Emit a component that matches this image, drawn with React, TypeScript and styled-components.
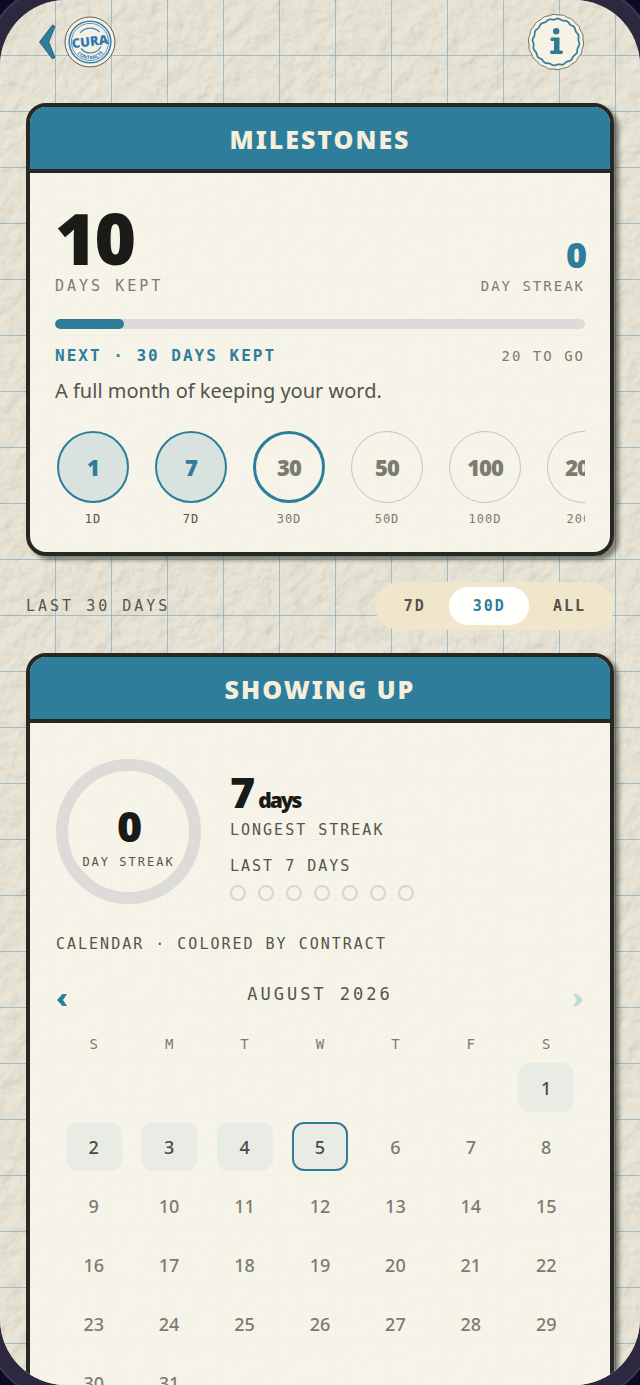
import { useState } from 'react';
import styled, { createGlobalStyle, css } from 'styled-components';

const GlobalStyle = createGlobalStyle`
  :root {
    --ink: #1a1a16;
    --ink-border: #282823;
    --text: #55544b;
    --text-soft: #7c7b72;
    --teal: #2d7d9b;
    --cream: #f4eedb;
    --track: #dcdbd7;
    --sans: 'Noto Sans', 'Open Sans', sans-serif;
    --mono: 'DejaVu Sans Mono', 'Liberation Mono', monospace;
  }

  *, *::before, *::after {
    box-sizing: border-box;
  }

  body {
    margin: 0;
    background: #0d0b24;
    color: var(--ink);
    font-family: var(--sans);
  }

  button {
    padding: 0;
    border: none;
    background: none;
    color: inherit;
    font: inherit;
    cursor: pointer;
  }

  svg {
    display: block;
  }
`;

const Screen = styled.div`
  position: relative;
  height: 100vh;
  overflow: hidden;
  border-radius: 66px;
  box-shadow: 0 0 0 15px #2b2840, 0 0 0 17px #3c3a50;
`;

const Paper = styled.svg`
  position: absolute;
  inset: 0;
  width: 100%;
  height: 100%;
`;

const Scroller = styled.div`
  --grid-line: transparent 55px, rgba(120, 168, 196, 0.65) 55px;

  position: relative;
  height: 100%;
  overflow-y: auto;
  scrollbar-width: none;
  background-image:
    linear-gradient(to right, var(--grid-line)),
    linear-gradient(to bottom, var(--grid-line));
  background-size: 56px 56px;
`;

const Page = styled.main`
  display: flex;
  flex-direction: column;
  padding: 0 26px 40px;
`;

const TopBar = styled.header`
  display: flex;
  align-items: center;
  justify-content: space-between;
  padding: 13px 29px 32px 12px;
`;

const BackLink = styled.a`
  display: flex;
  align-items: center;
  gap: 8px;
`;

const Card = styled.section`
  overflow: hidden;
  border: 4px solid var(--ink-border);
  border-radius: 20px;
  background: rgba(246, 244, 234, 0.94);
  background-clip: padding-box;
  box-shadow: 5px 4px 4px rgba(50, 48, 38, 0.55);
`;

const CardTitle = styled.h2`
  margin: 0;
  padding: 15px 0 13px;
  border-bottom: 4px solid var(--ink-border);
  background: var(--teal);
  color: var(--cream);
  font-size: 25px;
  font-weight: 900;
  line-height: 34px;
  letter-spacing: 2px;
  text-align: center;
  text-transform: uppercase;
`;

const CardBody = styled.div<{ $padding: string }>`
  padding: ${({ $padding }) => $padding};
`;

const labelSizes = {
  xs: css`
    font-size: 12px;
    letter-spacing: 1px;
  `,
  sm: css`
    font-size: 14px;
    letter-spacing: 2px;
  `,
  md: css`
    font-size: 15px;
    letter-spacing: 2px;
  `,
  wide: css`
    font-size: 15px;
    letter-spacing: 3px;
  `,
  lg: css`
    font-size: 17px;
    letter-spacing: 3px;
  `,
};

const Label = styled.span<{ $size?: keyof typeof labelSizes; $soft?: boolean }>`
  color: ${({ $soft }) => ($soft ? 'var(--text-soft)' : 'var(--text)')};
  font-family: var(--mono);
  line-height: 20px;
  text-transform: uppercase;
  white-space: nowrap;
  ${({ $size }) => labelSizes[$size ?? 'md']}
`;

const Row = styled.div`
  display: flex;
  align-items: flex-end;
  justify-content: space-between;
`;

const Stat = styled.div<{ $align?: 'start' | 'end' }>`
  display: flex;
  flex-direction: column;
  align-items: ${({ $align }) => $align ?? 'start'};
  gap: 3px;
`;

const StatValue = styled.strong<{ $size: number; $teal?: boolean }>`
  color: ${({ $teal }) => ($teal ? 'var(--teal)' : 'var(--ink)')};
  font-size: ${({ $size }) => $size}px;
  font-weight: 900;
  line-height: 1;
  letter-spacing: -2px;

  small {
    margin-left: 5px;
    font-size: 21px;
  }
`;

const Track = styled.div`
  height: 10px;
  margin: 23px 0 17px;
  overflow: hidden;
  border-radius: 5px;
  background: var(--track);
`;

const Fill = styled.div`
  height: 100%;
  border-radius: 5px;
  background: var(--teal);
`;

const NextLabel = styled.span`
  color: var(--teal);
  font-family: var(--mono);
  font-size: 16px;
  font-weight: 700;
  line-height: 20px;
  letter-spacing: 2px;
`;

const Note = styled.p`
  margin: 10px 0 25px;
  color: var(--text);
  font-size: 20px;
  line-height: 30px;
`;

const Badges = styled.ul`
  display: flex;
  gap: 22px;
  margin: 0;
  padding: 0;
  overflow: hidden;
  list-style: none;
`;

const BadgeItem = styled.li`
  display: flex;
  flex: 0 0 76px;
  flex-direction: column;
  align-items: center;
  gap: 6px;
`;

type BadgeState = 'done' | 'next' | 'locked';

const BadgeCircle = styled.span<{ $state: BadgeState }>`
  display: flex;
  align-items: center;
  justify-content: center;
  width: 72px;
  height: 72px;
  border: 1px solid #c3c2bc;
  border-radius: 50%;
  color: var(--text-soft);
  font-size: 22px;
  font-weight: 900;
  letter-spacing: -1px;

  ${({ $state }) =>
    $state === 'done' &&
    css`
      border: 2px solid var(--teal);
      background: #d8e3df;
      color: var(--teal);
    `}

  ${({ $state }) =>
    $state === 'next' &&
    css`
      border: 3px solid var(--teal);
    `}
`;

const RangeBar = styled.div`
  display: flex;
  align-items: center;
  justify-content: space-between;
  padding: 26px 0 23px;
`;

const Segments = styled.div`
  display: flex;
  padding: 5px;
  border-radius: 24px;
  background: #efe6cc;
`;

const Segment = styled.button<{ $active: boolean }>`
  height: 38px;
  padding: 0 23px 0 24px;
  border-radius: 19px;
  background: ${({ $active }) => ($active ? '#fffffb' : 'transparent')};
  color: ${({ $active }) => ($active ? 'var(--teal)' : 'var(--text)')};
  font-family: var(--mono);
  font-size: 15px;
  font-weight: 700;
  letter-spacing: 2px;
`;

const StreakRow = styled.div`
  display: flex;
  align-items: center;
  gap: 29px;
`;

const Ring = styled.div`
  display: flex;
  flex-direction: column;
  align-items: center;
  justify-content: center;
  gap: 5px;
  width: 145px;
  height: 145px;
  padding-top: 12px;
  border: 12px solid var(--track);
  border-radius: 50%;
`;

const RingLabel = styled(Label)`
  font-size: 12px;
`;

const StreakInfo = styled.div`
  display: flex;
  flex-direction: column;
  gap: 7px;
  padding-top: 7px;
`;

const DayLog = styled.div`
  display: flex;
  flex-direction: column;
  gap: 9px;
  padding-top: 9px;
`;

const Dots = styled.div`
  display: flex;
  gap: 12px;

  span {
    width: 16px;
    height: 16px;
    border: 2px solid #d6d5cf;
    border-radius: 50%;
  }
`;

const SectionLabel = styled.div`
  display: flex;
  padding: 30px 0;
`;

const MonthBar = styled.div`
  display: flex;
  align-items: flex-start;
  justify-content: space-between;
  margin-bottom: 18px;
`;

const MonthButton = styled.button`
  display: flex;
  padding-top: 9px;
  color: var(--teal);

  &:disabled {
    color: #c0dadb;
  }
`;

const Calendar = styled.table`
  width: 100%;
  border-spacing: 0;
  table-layout: fixed;

  th {
    height: 38px;
    padding: 0;
    color: var(--text-soft);
    font-family: var(--mono);
    font-size: 14px;
    font-weight: 400;
  }

  td {
    padding: 0 0 10px;
  }
`;

const Day = styled.span<{ $past: boolean; $today: boolean }>`
  display: flex;
  align-items: center;
  justify-content: center;
  width: 56px;
  height: 49px;
  margin: 0 auto;
  border-radius: 12px;
  color: var(--text-soft);
  font-size: 18px;
  font-weight: 500;

  ${({ $past }) =>
    $past &&
    css`
      background: #e9ebe5;
      color: #4a4a42;
    `}

  ${({ $today }) =>
    $today &&
    css`
      border: 2px solid var(--teal);
    `}
`;

function PaperBackground() {
  return (
    <Paper aria-hidden="true">
      <defs>
        <filter id="grain" x="0" y="0" width="100%" height="100%" colorInterpolationFilters="sRGB">
          <feTurbulence type="fractalNoise" baseFrequency="0.06" numOctaves="3" seed="7" />
          <feColorMatrix values="0 0 0 0 0  0 0 0 0 0  0 0 0 0 0  1 0 0 0 0" />
          <feDiffuseLighting surfaceScale="3" diffuseConstant="1.05" lightingColor="#f3eee0">
            <feDistantLight azimuth="225" elevation="62" />
          </feDiffuseLighting>
        </filter>
      </defs>
      <rect width="100%" height="100%" filter="url(#grain)" />
      <rect width="100%" height="100%" fill="#e6e2d3" fillOpacity="0.8" />
    </Paper>
  );
}

function BackArrow() {
  return (
    <svg width="18" height="36" viewBox="0 0 18 36" aria-hidden="true">
      <path
        d="M14.500 1L1.500 18L14.500 35L17 33.500L10.800 18L17 2.500Z"
        fill="#2d7d9b"
        stroke="#2b5660"
        strokeWidth="0.800"
        strokeLinejoin="round"
      />
    </svg>
  );
}

function Logo() {
  return (
    <svg width="52" height="52" viewBox="0 0 52 52" role="img" aria-label="Cura Contracts">
      <circle cx="26" cy="26" r="25" fill="#f5f2e4" stroke="#625d4f" />
      <g fill="none" stroke="#3d7fb5">
        <circle cx="26" cy="26" r="20.800" strokeWidth="1.600" />
        <circle cx="26" cy="26" r="18.600" strokeWidth="0.800" />
        <path d="M16 17A13 13 0 0 1 35.500 16M17 32.500A12 12 0 0 0 37 30.500" strokeWidth="1.200" />
      </g>
      <path id="logo-arc" d="M8.800 29.500A17.500 17.500 0 0 0 43.200 28.500" fill="none" />
      <g fill="#3279b3" fontFamily="'Open Sans', 'Noto Sans', sans-serif" textAnchor="middle">
        <text
          x="26"
          y="30"
          fontSize="13"
          fontWeight="800"
          transform="rotate(-7 26 26)"
        >
          CURA
        </text>
        <text fontSize="5" fontWeight="700">
          <textPath href="#logo-arc" startOffset="50%">
            CONTRACTS
          </textPath>
        </text>
      </g>
    </svg>
  );
}

// wavy outline used by the round info seal
function sealPath(radius: number, depth: number, waves: number) {
  const points = Array.from({ length: 180 }, (_, i) => {
    const angle = (i / 180) * Math.PI * 2;
    const r = radius + Math.sin(angle * waves) * depth;
    return `${(29 + Math.cos(angle) * r).toFixed(2)} ${(29 + Math.sin(angle) * r).toFixed(2)}`;
  });
  return `M${points.join('L')}Z`;
}

function InfoSeal() {
  return (
    <svg width="58" height="58" viewBox="0 0 58 58" aria-hidden="true">
      <path d={sealPath(27.4, 0.3, 18)} fill="#f6f3e6" stroke="#6c6655" />
      <path d={sealPath(23, 0.5, 16)} fill="none" stroke="#3a7f92" strokeWidth="1.800" />
      <g fill="#2f7a90">
        <circle cx="29.200" cy="18.200" r="3.200" />
        <path d="M24.500 24.500H32.500V37.500H34.500Q36 37.500 36 39.250T34.500 41H24.500Q23 41 23 39.250T24.500 37.500H27V28H24.500Q23.500 28 23.500 26.250T24.500 24.500Z" />
      </g>
    </svg>
  );
}

function Chevron({ flip }: { flip?: boolean }) {
  return (
    <svg width="12" height="14" viewBox="0 0 12 14" aria-hidden="true">
      <path
        d={flip ? 'M1 1H5.500L11 7L5.500 13H1L5 7Z' : 'M11 1H6.500L1 7L6.500 13H11L7 7Z'}
        fill="currentColor"
      />
    </svg>
  );
}

const badges: { days: number; state: BadgeState }[] = [
  { days: 1, state: 'done' },
  { days: 7, state: 'done' },
  { days: 30, state: 'next' },
  { days: 50, state: 'locked' },
  { days: 100, state: 'locked' },
  { days: 200, state: 'locked' },
];

const ranges = ['7D', '30D', 'ALL'];
const rangeTitles: Record<string, string> = {
  '7D': 'Last 7 days',
  '30D': 'Last 30 days',
  ALL: 'All time',
};

const weekdays = ['S', 'M', 'T', 'W', 'T', 'F', 'S'];
const firstWeekday = 6;
const daysInMonth = 31;
const today = 5;

const weeks = Array.from({ length: 6 }, (_, week) =>
  weekdays.map((_, day) => {
    const date = week * 7 + day - firstWeekday + 1;
    return date > 0 && date <= daysInMonth ? date : null;
  })
);

function Milestones() {
  return (
    <Card>
      <CardTitle>Milestones</CardTitle>
      <CardBody $padding="29px 25px 23px">
        <Row>
          <Stat>
            <StatValue $size={71}>10</StatValue>
            <Label $size="wide" $soft>Days kept</Label>
          </Stat>
          <Stat $align="end">
            <StatValue $size={36} $teal>0</StatValue>
            <Label $size="sm" $soft>Day streak</Label>
          </Stat>
        </Row>
        <Track>
          <Fill style={{ width: '13%' }} />
        </Track>
        <Row>
          <NextLabel>NEXT · 30 DAYS KEPT</NextLabel>
          <Label $size="sm" $soft>20 to go</Label>
        </Row>
        <Note>A full month of keeping your word.</Note>
        <Badges>
          {badges.map(({ days, state }) => (
            <BadgeItem key={days}>
              <BadgeCircle $state={state}>{days}</BadgeCircle>
              <Label $size="xs" $soft={state !== 'done'}>{days}D</Label>
            </BadgeItem>
          ))}
        </Badges>
      </CardBody>
    </Card>
  );
}

function ShowingUp() {
  return (
    <Card>
      <CardTitle>Showing up</CardTitle>
      <CardBody $padding="36px 26px 26px">
        <StreakRow>
          <Ring>
            <StatValue $size={43}>0</StatValue>
            <RingLabel>Day streak</RingLabel>
          </Ring>
          <StreakInfo>
            <StatValue $size={43}>
              7<small>days</small>
            </StatValue>
            <Label>Longest streak</Label>
            <DayLog>
              <Label>Last 7 days</Label>
              <Dots>
                {Array.from({ length: 7 }, (_, i) => (
                  <span key={i} />
                ))}
              </Dots>
            </DayLog>
          </StreakInfo>
        </StreakRow>
        <SectionLabel>
          <Label>Calendar · colored by contract</Label>
        </SectionLabel>
        <MonthBar>
          <MonthButton type="button" aria-label="Previous month">
            <Chevron />
          </MonthButton>
          <Label $size="lg">August 2026</Label>
          <MonthButton type="button" aria-label="Next month" disabled>
            <Chevron flip />
          </MonthButton>
        </MonthBar>
        <Calendar>
          <thead>
            <tr>
              {weekdays.map((name, i) => (
                <th key={i} scope="col">{name}</th>
              ))}
            </tr>
          </thead>
          <tbody>
            {weeks.map((week, i) => (
              <tr key={i}>
                {week.map((date, j) => (
                  <td key={j}>
                    {date && (
                      <Day $past={date <= today} $today={date === today}>
                        {date}
                      </Day>
                    )}
                  </td>
                ))}
              </tr>
            ))}
          </tbody>
        </Calendar>
      </CardBody>
    </Card>
  );
}

export default function App() {
  const [range, setRange] = useState('30D');

  return (
    <>
      <GlobalStyle />
      <Screen>
        <PaperBackground />
        <Scroller>
          <Page>
            <TopBar>
              <BackLink href="#" aria-label="Back">
                <BackArrow />
                <Logo />
              </BackLink>
              <button type="button" aria-label="Info">
                <InfoSeal />
              </button>
            </TopBar>
            <Milestones />
            <RangeBar>
              <Label $size="wide">{rangeTitles[range]}</Label>
              <Segments>
                {ranges.map((name) => (
                  <Segment
                    key={name}
                    type="button"
                    $active={name === range}
                    aria-pressed={name === range}
                    onClick={() => setRange(name)}
                  >
                    {name}
                  </Segment>
                ))}
              </Segments>
            </RangeBar>
            <ShowingUp />
          </Page>
        </Scroller>
      </Screen>
    </>
  );
}
